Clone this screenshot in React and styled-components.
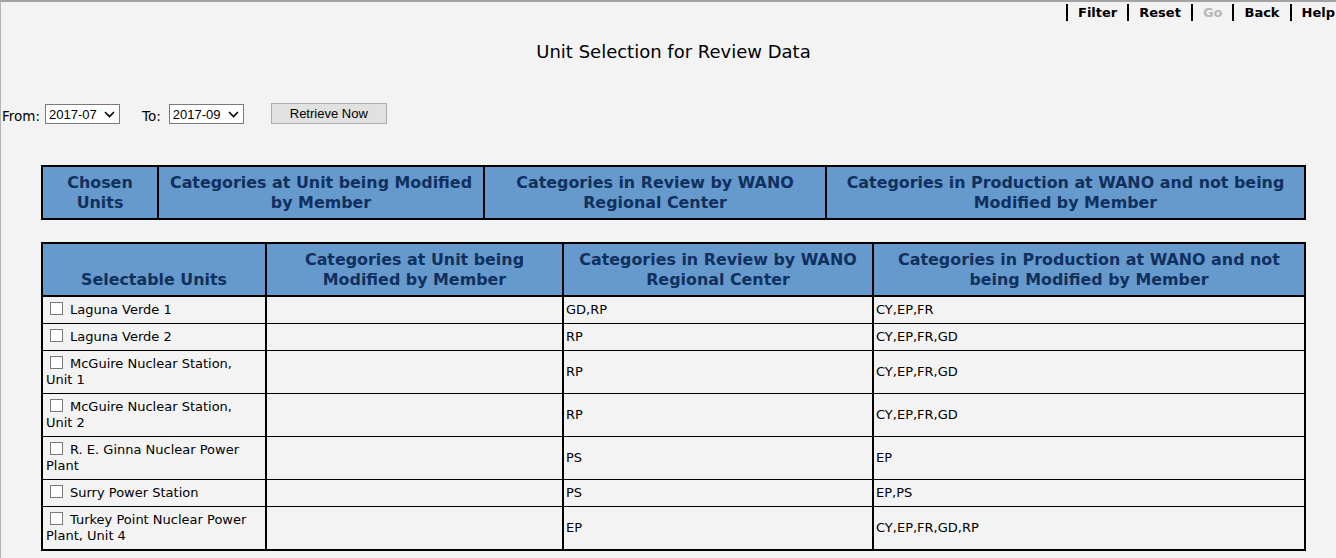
import React from 'react';
import styled, { createGlobalStyle } from 'styled-components';

const GlobalStyle = createGlobalStyle`
	html, body {
		margin: 0;
		padding: 0;
		background: #f3f3f3;
	}
	body {
		font-family: 'DejaVu Sans', Verdana, sans-serif;
		font-size: 13px;
		color: #000;
	}
`;

const Page = styled.div`
	min-height: 556px;
	border-top: 2px solid #a3a3a3;
	border-left: 1px solid #b5b5b5;
	background: #f3f3f3;
`;

const Toolbar = styled.div`
	display: flex;
	justify-content: flex-end;
	padding-top: 2px;
`;

const ToolLink = styled.span`
	display: flex;
	align-items: center;
	height: 17px;
	padding: 0 10px 0 10px;
	border-left: 2px solid #000;
	font-weight: bold;
	font-size: 13px;
	color: ${(p) => (p.disabled ? '#b8b8b8' : '#000')};
	&:last-child {
		padding-right: 1px;
	}
`;

const Title = styled.h1`
	margin: 20px 0 0;
	padding-left: 10px;
	text-align: center;
	font-size: 18px;
	font-weight: normal;
	line-height: 22px;
`;

const FilterRow = styled.div`
	display: flex;
	align-items: center;
	margin-top: 41px;
	padding-left: 1px;
`;

const Label = styled.span`
	font-size: 13.5px;
	margin-right: ${(p) => p.gap || 5}px;
	padding-top: 3px;
`;

const SelectWrap = styled.div`
	position: relative;
	width: 75px;
	height: 20px;
	margin-right: ${(p) => p.gap}px;
`;

const Select = styled.select`
	appearance: none;
	box-sizing: border-box;
	width: 100%;
	height: 20px;
	border: 1px solid #7a7a7a;
	border-radius: 0;
	background: #fff;
	font-family: 'Liberation Sans', Arial, sans-serif;
	font-size: 13px;
	padding: 0 0 0 3px;
	color: #000;
	outline: none;
`;

const Chevron = styled.svg`
	position: absolute;
	right: 5px;
	top: 7px;
	pointer-events: none;
`;

const Button = styled.button`
	box-sizing: border-box;
	width: 116px;
	height: 21px;
	margin-top: -2px;
	border: 1px solid #adadad;
	border-radius: 0;
	background: #e1e1e1;
	font-family: 'Liberation Sans', Arial, sans-serif;
	font-size: 13px;
	color: #000;
	padding: 0;
`;

const Table = styled.table`
	margin: ${(p) => p.top}px 0 0 40px;
	width: 1263px;
	border-collapse: collapse;
	border: 2px solid #000;
	table-layout: fixed;
`;

const Th = styled.th`
	background: #6699cc;
	color: #10305e;
	font-size: 15.9px;
	font-weight: bold;
	line-height: 20px;
	border: 2px solid #000;
	padding: 6px 4px 5px;
	vertical-align: ${(p) => (p.bottom ? 'bottom' : 'middle')};
	text-align: center;
`;

const Td = styled.td`
	border-left: 2px solid #000;
	border-right: 2px solid #000;
	border-bottom: 1px solid #000;
	padding: 5px 3px 5px ${(p) => (p.first ? 3 : 2)}px;
	font-size: 13px;
	line-height: 16px;
	vertical-align: middle;
`;

const Check = styled.span`
	display: inline-block;
	width: 11px;
	height: 11px;
	border: 1px solid #7a7a7a;
	background: #fff;
	margin: 0 7px 0 4px;
	vertical-align: -1px;
`;

const units = [
	{ name: 'Laguna Verde 1', review: 'GD,RP', prod: 'CY,EP,FR' },
	{ name: 'Laguna Verde 2', review: 'RP', prod: 'CY,EP,FR,GD' },
	{ name: 'McGuire Nuclear Station, Unit 1', review: 'RP', prod: 'CY,EP,FR,GD' },
	{ name: 'McGuire Nuclear Station, Unit 2', review: 'RP', prod: 'CY,EP,FR,GD' },
	{ name: 'R. E. Ginna Nuclear Power Plant', review: 'PS', prod: 'EP' },
	{ name: 'Surry Power Station', review: 'PS', prod: 'EP,PS' },
	{ name: 'Turkey Point Nuclear Power Plant, Unit 4', review: 'EP', prod: 'CY,EP,FR,GD,RP' },
];

function DateSelect({ value, gap }) {
	return (
		<SelectWrap gap={gap}>
			<Select defaultValue={value}>
				<option>{value}</option>
			</Select>
			<Chevron width="11" height="7" viewBox="0 0 11 7">
				<path d="M1 1l4.5 4.5L10 1" fill="none" stroke="#000" strokeWidth="1.6" />
			</Chevron>
		</SelectWrap>
	);
}

export default function App() {
	return (
		<Page>
			<GlobalStyle />
			<Toolbar>
				<ToolLink>Filter</ToolLink>
				<ToolLink>Reset</ToolLink>
				<ToolLink disabled>Go</ToolLink>
				<ToolLink>Back</ToolLink>
				<ToolLink>Help</ToolLink>
			</Toolbar>
			<Title>Unit Selection for Review Data</Title>
			<FilterRow>
				<Label>From:</Label>
				<DateSelect value="2017-07" gap={22} />
				<Label gap={8}>To:</Label>
				<DateSelect value="2017-09" gap={27} />
				<Button>Retrieve Now</Button>
			</FilterRow>

			<Table top={41}>
				<colgroup>
					<col style={{ width: 116 }} />
					<col style={{ width: 326 }} />
					<col style={{ width: 342 }} />
					<col style={{ width: 479 }} />
				</colgroup>
				<thead>
					<tr>
						<Th>Chosen Units</Th>
						<Th>Categories at Unit being Modified by Member</Th>
						<Th>Categories in Review by WANO Regional Center</Th>
						<Th>Categories in Production at WANO and not being Modified by Member</Th>
					</tr>
				</thead>
			</Table>

			<Table top={22}>
				<colgroup>
					<col style={{ width: 224 }} />
					<col style={{ width: 297 }} />
					<col style={{ width: 310 }} />
					<col style={{ width: 432 }} />
				</colgroup>
				<thead>
					<tr>
						<Th bottom>Selectable Units</Th>
						<Th>Categories at Unit being Modified by Member</Th>
						<Th>Categories in Review by WANO Regional Center</Th>
						<Th>Categories in Production at WANO and not being Modified by Member</Th>
					</tr>
				</thead>
				<tbody>
					{units.map((u) => (
						<tr key={u.name}>
							<Td first>
								<Check />
								{u.name}
							</Td>
							<Td />
							<Td>{u.review}</Td>
							<Td>{u.prod}</Td>
						</tr>
					))}
				</tbody>
			</Table>
		</Page>
	);
}
